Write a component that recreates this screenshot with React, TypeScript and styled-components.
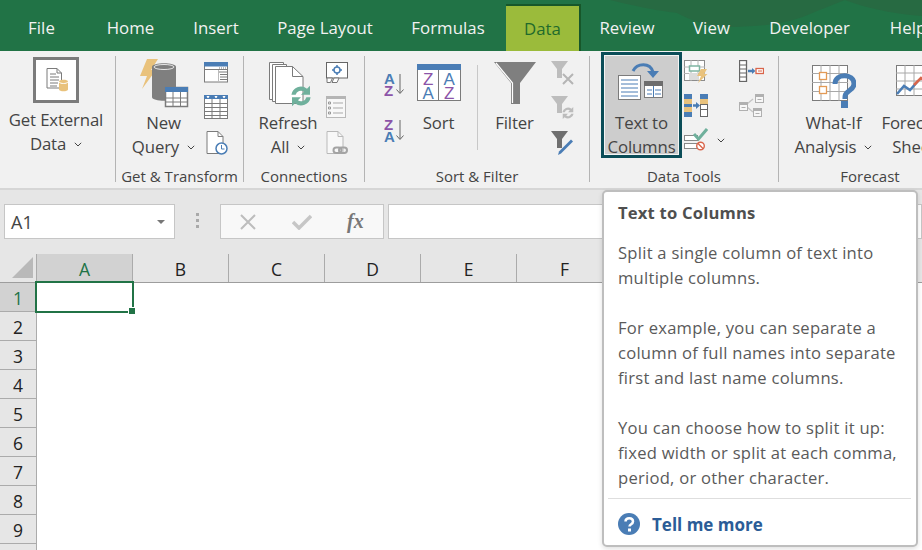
import React from "react";
import styled, { createGlobalStyle } from "styled-components";

const Global = createGlobalStyle`
  html, body { margin: 0; padding: 0; background: #fff; }
  body { width: 922px; height: 550px; overflow: hidden; font-family: "Open Sans", "Noto Sans", sans-serif; }
`;

const Page = styled.div`
  position: relative;
  width: 922px;
  height: 550px;
  overflow: hidden;
  background: #fff;
`;

/* ---------- title / tabs ---------- */
const TabBar = styled.div`
  position: relative;
  height: 51px;
  background: #217346;
  display: flex;
  align-items: stretch;
  padding-left: 8px;
  overflow: hidden;
`;
const Swoosh = styled.svg`
  position: absolute;
  left: 560px;
  top: 0;
`;
const Tab = styled.div<{ $w: number; $pr?: number }>`
  position: relative;
  flex: none;
  width: ${(p) => p.$w}px;
  padding: 4px ${(p) => p.$pr ?? 0}px 0 0;
  display: flex;
  align-items: center;
  justify-content: center;
  font-size: 16.8px;
  letter-spacing: 0.05px;
  box-sizing: border-box;
  white-space: nowrap;
  color: #f2f2f2;
`;
const ActiveTab = styled(Tab)`
  margin-top: 4px;
  padding-top: 0;
  color: #1f6a2c;
  background: #9bbb3b;
  border-top: 2px solid #17572a;
  border-right: 2px solid #17572a;
`;

/* ---------- ribbon ---------- */
const Ribbon = styled.div`
  display: flex;
  height: 137px;
  background: #f1f1f1;
  color: #444;
  border-bottom: 2px solid #d6d6d6;
  overflow: hidden;
`;
const Group = styled.div<{ $w: number }>`
  flex: none;
  width: ${(p) => p.$w}px;
  box-sizing: border-box;
  display: flex;
  flex-direction: column;
`;
const GroupBody = styled.div<{ $sep?: boolean }>`
  flex: 1;
  min-height: 0;
  display: flex;
  flex-direction: column;
  margin: 5px 0 6px;
  border-right: ${(p) => (p.$sep === false ? "0" : "1px solid #b4b4b4")};
`;
const Tools = styled.div`
  flex: 1;
  min-height: 0;
  display: flex;
  align-items: flex-start;
`;
const GroupLabel = styled.div`
  flex: none;
  height: 23px;
  margin-bottom: -6px;
  text-align: center;
  font-size: 15px;
  line-height: 23px;
  white-space: nowrap;
`;
const Large = styled.div<{ $w: number; $ml?: number; $iconTop?: number }>`
  flex: none;
  width: ${(p) => p.$w}px;
  margin-left: ${(p) => p.$ml ?? 0}px;
  padding-top: ${(p) => p.$iconTop ?? 0}px;
  display: flex;
  flex-direction: column;
  align-items: center;
  font-size: 16.8px;
  letter-spacing: -0.15px;
  white-space: nowrap;
`;
const IconSlot = styled.div<{ $h: number }>`
  flex: none;
  height: ${(p) => p.$h}px;
  display: flex;
  align-items: flex-start;
  justify-content: center;
`;
const Line = styled.div`
  flex: none;
  height: 24px;
  line-height: 24px;
  display: flex;
  align-items: center;
  gap: 8px;
`;
const ValidationRow = styled(Line)`
  gap: 9px;
`;
const Stack = styled.div<{ $ml: number; $pt: number; $gap: number }>`
  flex: none;
  margin-left: ${(p) => p.$ml}px;
  padding-top: ${(p) => p.$pt}px;
  display: flex;
  flex-direction: column;
  gap: ${(p) => p.$gap}px;
`;
const VRule = styled.div`
  flex: none;
  width: 1px;
  height: 85px;
  margin: 9px 0 0 11px;
  background: #c8c8c8;
`;
const Selected = styled(Large)`
  height: 106px;
  box-sizing: border-box;
  background: #cdcdcd;
  border: 3px solid #0b4d58;
  box-shadow: inset 0 0 0 1px #f4f4f4;
  margin-top: -4px;
`;
const Chevron = () => (
  <svg width="8" height="5" viewBox="0 0 8 5"><path d="M.8.8 4 4 7.2.8" fill="none" stroke="#444" strokeWidth="1" /></svg>
);

/* ---------- icons ---------- */
const GR = "#7b7b7b";
const BL = "#4a7db5";
const OR = "#e9c27c";

const ExternalIcon = () => (
  <svg width="46" height="46" viewBox="0 0 46 46">
    <rect x="1.500" y="1.500" width="43" height="43" fill="#fff" stroke={GR} strokeWidth="3" />
    <path d="M14 11.500h10l4.500 4.500v15h-14.500z" fill="#fff" stroke={GR} />
    <path d="M24 11.500v4.500h4.500M17 17h6M17 20h9M17 23h9M17 26h8M17 29h7" fill="none" stroke={GR} />
    <path d="M26 24.500c0-2.400 9-2.400 9 0v8c0 2.400-9 2.400-9 0z" fill={OR} />
    <path d="M26 25c1.500 2 7.500 2 9 0" fill="none" stroke="#fff" />
  </svg>
);
const QueryIcon = () => (
  <svg width="50" height="50" viewBox="0 0 50 50">
    <path d="M8 1h11l-7 11h5L3 31l5-13H1z" fill={OR} />
    <path d="M13 9c0-5 24-5 24 0v30c0 5-24 5-24 0z" fill="#7f7f7f" />
    <ellipse cx="25" cy="9" rx="10" ry="2.500" fill="none" stroke="#e6e6e6" />
    <rect x="26.500" y="29.500" width="22" height="19" fill="#fff" stroke={GR} strokeWidth="1.500" />
    <rect x="26" y="29" width="23" height="5" fill={BL} />
    <path d="M26.500 40h22M26.500 44h22M34 34v15M41.500 34v15" stroke={GR} fill="none" />
  </svg>
);
const FormWindow = () => (
  <svg width="24" height="21" viewBox="0 0 24 21">
    <rect x=".5" y=".5" width="23" height="19.500" fill="#fff" stroke={GR} />
    <rect width="24" height="4.500" fill={BL} />
    <path d="M1 7.500h22" stroke={GR} />
    <path d="M15 10h8M16 12.500h7M16 15h7M16 17.500h7" stroke={GR} />
    <path d="M15 6h8" stroke={GR} strokeDasharray="1 1" />
    <path d="M14.500 8v12" stroke="#bbb" />
  </svg>
);
const GridTable = () => (
  <svg width="24" height="24" viewBox="0 0 24 24">
    <rect x=".5" y=".5" width="23" height="23" fill="#fff" stroke={GR} />
    <rect width="24" height="4" fill={BL} />
    <path d="M2.500 1h3l-1 2h-1zM10.500 1h3l-1 2h-1zM18.500 1h3l-1 2h-1z" fill="#fff" />
    <path d="M0 8.500h24M0 12.500h24M0 16.500h24M0 20.500h24M8 4v20M16 4v20" stroke={GR} />
  </svg>
);
const ClockDoc = () => (
  <svg width="24" height="24" viewBox="0 0 24 24">
    <path d="M3 .5h11l5 5v17H3z" fill="#fff" stroke={GR} />
    <path d="M14 .5v5h5" fill="none" stroke={GR} />
    <circle cx="17.500" cy="17.500" r="5.500" fill="#fff" stroke={BL} strokeWidth="1.500" />
    <path d="M17.500 14v4h3" fill="none" stroke={BL} />
  </svg>
);
const RefreshArrows = ({ color, x, y, s }: { color: string; x: number; y: number; s: number }) => (
  <g transform={`translate(${x} ${y}) scale(${s})`}>
    <path d="M2 9a8 8 0 0 1 13-5l2.500-2.500V9h-7.500l2.600-2.600A4.600 4.600 0 0 0 5.500 9z" fill={color} />
    <path d="M18 11a8 8 0 0 1-13 5l-2.500 2.500V11H10l-2.600 2.600A4.600 4.600 0 0 0 14.500 11z" fill={color} />
  </g>
);
const RefreshIcon = () => (
  <svg width="50" height="46" viewBox="0 0 50 46">
    <path d="M6.500 .5h14v37h-14z" fill="#fff" stroke={GR} />
    <path d="M9.500 2.500h14v37h-14z" fill="#fff" stroke={GR} />
    <path d="M12.500 4.500h17l10.500 10v27h-27.500z" fill="#fff" stroke={GR} />
    <path d="M29.500 4.500v10h10.500" fill="none" stroke={GR} />
    <RefreshArrows color="#6fb09c" x={26} y={22} s={1.200} />
  </svg>
);
const Slicer = () => (
  <svg width="22" height="21" viewBox="0 0 22 21">
    <rect x=".5" y=".5" width="21" height="15.500" fill="#fff" stroke="#666" />
    <path d="M1 16h5.500l-2 4.500H1zM8 16h5l-2 4.500H6z" fill="#fff" stroke="#777" />
    <circle cx="11" cy="8" r="3" fill="none" stroke={BL} strokeWidth="1.500" />
    <path d="M11 3v2M11 11v2M6 8h2M14 8h2" stroke={BL} strokeWidth="1.500" />
  </svg>
);
const PropList = () => (
  <svg width="20" height="22" viewBox="0 0 20 22">
    <rect x=".5" y=".5" width="19" height="21" fill="#f8f8f8" stroke="#b9b9b9" />
    <rect width="20" height="3" fill="#b5b5b5" />
    <path d="M7 7h10M7 12h10M7 17h10" stroke="#a9a9a9" />
    <path d="M2.500 6h2v2h-2zM2.500 11h2v2h-2zM2.500 16h2v2h-2z" fill="none" stroke="#999" />
  </svg>
);
const LinkDoc = () => (
  <svg width="22" height="24" viewBox="0 0 22 24">
    <path d="M1 .5h11l5 5v17H1z" fill="#f8f8f8" stroke="#b9b9b9" />
    <path d="M12 .5v5h5" fill="none" stroke="#b9b9b9" />
    <rect x="7.500" y="16.500" width="8" height="5.500" rx="2.700" fill="none" stroke="#a4a4a4" strokeWidth="2" />
    <rect x="13" y="16.500" width="8" height="5.500" rx="2.700" fill="none" stroke="#a4a4a4" strokeWidth="2" />
  </svg>
);
const SortSmall = ({ flip }: { flip?: boolean }) => (
  <svg width="21" height="24" viewBox="0 0 21 24">
    <text x="0" y="12" fontSize="15" fontWeight="700" fontFamily="Liberation Sans" fill={flip ? "#8c54a8" : BL}>{flip ? "Z" : "A"}</text>
    <text x="0" y="23.500" fontSize="15" fontWeight="700" fontFamily="Liberation Sans" fill={flip ? BL : "#8c54a8"}>{flip ? "A" : "Z"}</text>
    <path d="M16 2v19M12.500 17.500l3.500 4 3.500-4" fill="none" stroke="#666" />
  </svg>
);
const SortIcon = () => (
  <svg width="44" height="37" viewBox="0 0 44 37">
    <rect x=".5" y=".5" width="43" height="36" fill="#fff" stroke={GR} />
    <rect width="44" height="6" fill={BL} />
    <path d="M21.500 6v31" stroke={GR} />
    <g fontFamily="Liberation Sans" fontSize="17" textAnchor="middle">
      <text x="11" y="20.500" fill="#8c54a8">Z</text>
      <text x="11" y="34.500" fill={BL}>A</text>
      <text x="32" y="20.500" fill={BL}>A</text>
      <text x="32" y="34.500" fill="#8c54a8">Z</text>
    </g>
  </svg>
);
const FilterIcon = () => (
  <svg width="42" height="42" viewBox="0 0 42 42">
    <path d="M0 0h42L26 21v21h-9V21z" fill="#7f7f7f" />
    <path d="M2 1l16.500 20v20" fill="none" stroke="#fff" strokeWidth="1.200" />
  </svg>
);
const FunnelSmall = ({ dim }: { dim?: boolean }) => (
  <path d="M0 0h17L11 8v9H6V8z" fill={dim ? "#bdbdbd" : "#6f6f6f"} />
);
const ClearFilter = () => (
  <svg width="24" height="24" viewBox="0 0 24 24">
    <FunnelSmall dim />
    <path d="M12 13l10 10M22 13 12 23" stroke="#b5b5b5" strokeWidth="2" />
  </svg>
);
const ReapplyFilter = () => (
  <svg width="24" height="24" viewBox="0 0 24 24">
    <FunnelSmall dim />
    <RefreshArrows color="#bcbcbc" x={10} y={10} s={0.700} />
  </svg>
);
const AdvancedFilter = () => (
  <svg width="24" height="25" viewBox="0 0 24 25">
    <FunnelSmall />
    <path d="M7 24l1-3.500L20 8.500l2 2L10 22.500z" fill={BL} />
  </svg>
);
const TextColumnsIcon = () => (
  <svg width="48" height="39" viewBox="0 0 48 39">
    <rect x=".5" y="13.500" width="22" height="24" fill="#fff" stroke={GR} />
    <path d="M3 18h17M3 22h17M3 26h17M3 30h17M3 34h17" stroke={BL} />
    <rect x="26.500" y="19.500" width="18" height="16" fill="#fff" stroke={GR} />
    <rect x="26" y="19" width="19" height="5" fill="#6d6d6d" />
    <path d="M35.500 24v11M29 28h5M37 28h6M29 32h5M37 32h6" stroke={BL} />
    <path d="M15 9c4-8 17-9 20 1" fill="none" stroke={BL} strokeWidth="3" />
    <path d="M29 9h12l-6 7z" fill={BL} />
  </svg>
);
const FlashFill = () => (
  <svg width="25" height="23" viewBox="0 0 25 23">
    <rect x=".5" y=".5" width="20" height="20" fill="#fff" stroke="#8c8c8c" />
    <path d="M0 7h21M0 13.500h21M7 0v21M14 0v21" stroke="#b5b5b5" />
    <rect x="5.500" y="6" width="10" height="5" fill="#fff" stroke="#7fb5a2" strokeWidth="1.500" />
    <rect x="5" y="13" width="9" height="7" fill="#dcdcdc" />
    <path d="M17 9h6l-3 5h3.500L14 23l3-7h-4z" fill={OR} />
  </svg>
);
const RemoveDup = () => (
  <svg width="24" height="23" viewBox="0 0 24 23">
    <rect width="8" height="23" fill={BL} />
    <rect y="5" width="8" height="5" fill={OR} />
    <rect y="13" width="8" height="5" fill={OR} />
    <rect x="16.500" y=".5" width="7" height="22" fill="#fff" stroke="#666" />
    <rect x="16" width="8" height="5" fill={BL} />
    <rect x="16" y="5" width="8" height="5" fill={OR} />
    <path d="M16 10.500h8M16 15.500h8" stroke="#666" />
    <path d="M9 11.500h4" stroke={BL} strokeWidth="2.500" />
    <path d="M12 8l4 3.500-4 3.500z" fill={BL} />
  </svg>
);
const Validation = () => (
  <svg width="24" height="24" viewBox="0 0 24 24">
    <rect x=".5" y="7.500" width="13" height="5" fill="#fff" stroke="#888" />
    <rect x=".5" y="15.500" width="13" height="5" fill="#fff" stroke="#888" />
    <path d="M10 6l4.500 5L23 1" fill="none" stroke="#6fb09c" strokeWidth="3" />
    <circle cx="16.500" cy="18" r="3.800" fill="#fff" stroke="#d9654b" strokeWidth="1.400" />
    <path d="M13.800 15.300l5.400 5.400" stroke="#d9654b" strokeWidth="1.400" />
  </svg>
);
const Consolidate = () => (
  <svg width="25" height="22" viewBox="0 0 25 22">
    <rect x=".5" y=".5" width="7" height="21" fill="#fff" stroke="#666" strokeWidth="1.300" />
    <path d="M0 5h8M0 9h8M0 13h8M0 17h8" stroke="#666" />
    <path d="M9 11h5" stroke={BL} strokeWidth="2.500" />
    <path d="M13 8l3.500 3-3.500 3z" fill={BL} />
    <rect x="17" y="8.500" width="7.500" height="5" fill="#fff" stroke="#d9654b" strokeWidth="1.300" />
    <path d="M19 11h4" stroke="#d9654b" />
  </svg>
);
const Relations = () => (
  <svg width="25" height="23" viewBox="0 0 25 23">
    <path d="M8 10l6-5M8 13l6 5" stroke="#c4c4c4" strokeWidth="1.300" />
    <rect x=".5" y="8.500" width="8" height="8" fill="#f7f7f7" stroke="#b0b0b0" />
    <rect y="8" width="9" height="3" fill="#b0b0b0" />
    <path d="M2.500 13.500h4" stroke="#b0b0b0" />
    <rect x="16.500" y=".5" width="8" height="8" fill="#f7f7f7" stroke="#b0b0b0" />
    <rect x="16" width="9" height="3" fill="#b0b0b0" />
    <path d="M18.500 5.500h4" stroke="#b0b0b0" />
    <rect x="14.500" y="14.500" width="8" height="8" fill="#f7f7f7" stroke="#b0b0b0" />
    <rect x="14" y="14" width="9" height="3" fill="#b0b0b0" />
    <path d="M16.500 19.500h4" stroke="#b0b0b0" />
  </svg>
);
const WhatIf = () => (
  <svg width="44" height="43" viewBox="0 0 44 43">
    <rect x=".5" y=".5" width="35" height="35" fill="#fff" stroke={GR} />
    <path d="M0 8.500h36M0 17.500h36M0 26.500h36M9 0v36M18 0v36M27 0v36" stroke="#a8a8a8" />
    <rect x="7.500" y="7.500" width="7" height="7" fill="#fff" stroke="#e39a55" strokeWidth="1.300" />
    <rect x="7.500" y="21.500" width="7" height="7" fill="#fff" stroke="#e39a55" strokeWidth="1.300" />
    <path d="M23 19c0-11 19-11 19 0 0 7-9 6-9 13v2" fill="none" stroke={BL} strokeWidth="5" />
    <rect x="29" y="36" width="7" height="7" fill={BL} />
  </svg>
);
const ForecastIcon = () => (
  <svg width="36" height="36" viewBox="0 0 36 36">
    <rect x=".5" y=".5" width="34" height="30" fill="#fff" stroke={GR} />
    <path d="M0 8h35M0 16h35M0 24h35M9 0v31M18 0v31M27 0v31" stroke="#a8a8a8" />
    <path d="M1 29l7-8 6 4 8-9" fill="none" stroke={BL} strokeWidth="2.500" />
    <path d="M18 20l7-7 5 4 5-3" fill="none" stroke="#d9654b" strokeWidth="2.500" />
  </svg>
);

/* ---------- formula bar ---------- */
const FormulaBar = styled.div`
  height: 64px;
  background: #e6e6e6;
  display: flex;
  align-items: flex-start;
  padding-top: 14px;
  box-sizing: border-box;
  padding-left: 4px;
`;
const NameBox = styled.div`
  width: 171px;
  height: 35px;
  box-sizing: border-box;
  background: #fff;
  border: 1px solid #c6c6c6;
  display: flex;
  align-items: center;
  justify-content: space-between;
  padding: 0 9px 0 6px;
  font-size: 18px;
  color: #444;
`;
const Caret = styled.span`
  width: 0;
  height: 0;
  border-left: 4px solid transparent;
  border-right: 4px solid transparent;
  border-top: 4px solid #777;
`;
const Grip = styled.div`
  width: 45px;
  display: flex;
  flex-direction: column;
  align-items: center;
  gap: 3px;
  padding-top: 9px;
  & > i { width: 3px; height: 3px; background: #a9a9a9; display: block; }
`;
const FxButtons = styled.div`
  width: 164px;
  height: 35px;
  box-sizing: border-box;
  background: #f8f8f8;
  border: 1px solid #c6c6c6;
  display: flex;
  align-items: center;
  padding-left: 19px;
  gap: 36px;
`;
const FxGlyph = styled.span`
  font-family: "Liberation Serif", serif;
  font-style: italic;
  font-weight: 700;
  font-size: 20px;
  color: #777;
  margin-left: -1px;
`;
const FormulaInput = styled.div`
  flex: 1;
  height: 35px;
  box-sizing: border-box;
  margin-left: 4px;
  background: #fff;
  border: 1px solid #c6c6c6;
`;

/* ---------- sheet ---------- */
const ColHeaderRow = styled.div`
  display: flex;
  height: 29px;
  box-sizing: border-box;
  background: #e6e6e6;
  border-bottom: 1px solid #9d9d9d;
`;
const Corner = styled.div`
  flex: none;
  width: 37px;
  box-sizing: border-box;
  border-right: 1px solid #ababab;
  display: flex;
  align-items: flex-end;
  justify-content: flex-end;
  padding: 0 3px 4px 0;
`;
const ColHead = styled.div<{ $sel?: boolean }>`
  flex: none;
  width: 96px;
  box-sizing: border-box;
  border-right: 1px solid #ababab;
  text-align: center;
  font-size: 17.500px;
  line-height: 30px;
  background: ${(p) => (p.$sel ? "#d2d2d2" : "transparent")};
  color: ${(p) => (p.$sel ? "#217346" : "#222")};
`;
const SheetBody = styled.div`
  position: relative;
  display: flex;
  flex-direction: column;
`;
const RowHead = styled.div<{ $sel?: boolean }>`
  flex: none;
  width: 37px;
  height: 29px;
  box-sizing: border-box;
  border-right: 1px solid #ababab;
  border-bottom: 1px solid #ababab;
  text-align: center;
  font-size: 17.500px;
  line-height: 30px;
  background: ${(p) => (p.$sel ? "#d2d2d2" : "#e6e6e6")};
  color: ${(p) => (p.$sel ? "#217346" : "#222")};
`;
const Active = styled.div`
  position: absolute;
  left: 35px;
  top: -2px;
  width: 99px;
  height: 32px;
  box-sizing: border-box;
  border: 2px solid #217346;
`;
const Handle = styled.div`
  position: absolute;
  right: -3px;
  bottom: -3px;
  width: 7px;
  height: 7px;
  box-sizing: border-box;
  background: #217346;
  border: 1px solid #fff;
  border-right: 0;
  border-bottom: 0;
`;

/* ---------- tooltip ---------- */
const Tip = styled.div`
  position: absolute;
  left: 602px;
  top: 190px;
  width: 316px;
  height: 357px;
  box-sizing: border-box;
  background: #fff;
  border: 2px solid #bebebe;
  border-radius: 5px;
  box-shadow: 0 2px 5px rgba(0, 0, 0, 0.12);
  padding: 8px 5px 0 14px;
  display: flex;
  flex-direction: column;
  color: #5a5a5a;
  font-size: 16.600px;
  line-height: 25px;
  letter-spacing: 0.25px;
`;
const TipTitle = styled.div`
  font-weight: 700;
  font-size: 16.600px;
  letter-spacing: 0.2px;
  color: #4f4f4f;
  margin-bottom: 15px;
`;
const TipPara = styled.p`
  margin: 0 0 25px;
  white-space: nowrap;
`;
const TipFoot = styled.div`
  margin: -17.500px 0 0 -10px;
  border-top: 1px solid #dedede;
  padding: 13px 0 0 10px;
  display: flex;
  align-items: center;
  gap: 12px;
  font-weight: 700;
  color: #2b5c97;
  font-size: 17px;
  letter-spacing: 0;
`;

export default function App() {
  return (
    <Page>
      <Global />
      <TabBar>
        <Swoosh width="362" height="51" viewBox="0 0 362 51">
          <path d="M50 0C90 10 110 12 117 13 130 20 150 28 175 27 200 26 225 25 250 14 265 8 275 4 285 0z" fill="#276a42" />
          <path d="M285 0c15 6 45 14 77 16V0z" fill="#276a42" />
        </Swoosh>
        <Tab $w={78.500} $pr={11.500}>File</Tab>
        <Tab $w={88}>Home</Tab>
        <Tab $w={83}>Insert</Tab>
        <Tab $w={135}>Page Layout</Tab>
        <Tab $w={113.500} $pr={2.500}>Formulas</Tab>
        <ActiveTab $w={75}>Data</ActiveTab>
        <Tab $w={92}>Review</Tab>
        <Tab $w={77}>View</Tab>
        <Tab $w={119}>Developer</Tab>
        <Tab $w={78}>Help</Tab>
      </TabBar>
      <Ribbon>
        <Group $w={116}>
          <GroupBody>
            <Tools>
              <Large $w={112} $iconTop={1}>
                <IconSlot $h={51}><ExternalIcon /></IconSlot>
                <Line>Get External</Line>
                <Line>Data <Chevron /></Line>
              </Large>
            </Tools>
          </GroupBody>
        </Group>
        <Group $w={128}>
          <GroupBody>
            <Tools>
              <Large $w={79} $ml={8} $iconTop={2}>
                <IconSlot $h={53}><QueryIcon /></IconSlot>
                <Line>New</Line>
                <Line>Query <Chevron /></Line>
              </Large>
              <Stack $ml={1} $pt={6} $gap={12}>
                <FormWindow />
                <GridTable />
                <ClockDoc />
              </Stack>
            </Tools>
            <GroupLabel>Get &amp; Transform</GroupLabel>
          </GroupBody>
        </Group>
        <Group $w={121}>
          <GroupBody>
            <Tools>
              <Large $w={76} $ml={6} $iconTop={6}>
                <IconSlot $h={49}><RefreshIcon /></IconSlot>
                <Line>Refresh</Line>
                <Line>All <Chevron /></Line>
              </Large>
              <Stack $ml={0} $pt={6} $gap={13}>
                <Slicer />
                <PropList />
                <LinkDoc />
              </Stack>
            </Tools>
            <GroupLabel>Connections</GroupLabel>
          </GroupBody>
        </Group>
        <Group $w={225}>
          <GroupBody>
            <Tools>
              <Stack $ml={19} $pt={16} $gap={22}>
                <SortSmall />
                <SortSmall flip />
              </Stack>
              <Large $w={55} $ml={6} $iconTop={8}>
                <IconSlot $h={47}><SortIcon /></IconSlot>
                <Line>Sort</Line>
              </Large>
              <VRule />
              <Large $w={73} $iconTop={6}>
                <IconSlot $h={49}><FilterIcon /></IconSlot>
                <Line>Filter</Line>
              </Large>
              <Stack $ml={0} $pt={5} $gap={11}>
                <ClearFilter />
                <ReapplyFilter />
                <AdvancedFilter />
              </Stack>
            </Tools>
            <GroupLabel>Sort &amp; Filter</GroupLabel>
          </GroupBody>
        </Group>
        <Group $w={189}>
          <GroupBody>
            <Tools>
              <Selected $w={81} $ml={11} $iconTop={7}>
                <IconSlot $h={49}><TextColumnsIcon /></IconSlot>
                <Line>Text to</Line>
                <Line>Columns</Line>
              </Selected>
              <Stack $ml={2} $pt={4} $gap={11}>
                <FlashFill />
                <RemoveDup />
                <ValidationRow><Validation /><Chevron /></ValidationRow>
              </Stack>
              <Stack $ml={14} $pt={4} $gap={12}>
                <Consolidate />
                <Relations />
              </Stack>
            </Tools>
            <GroupLabel>Data Tools</GroupLabel>
          </GroupBody>
        </Group>
        <Group $w={182}>
          <GroupBody $sep={false}>
            <Tools>
              <Large $w={99} $ml={5} $iconTop={9}>
                <IconSlot $h={46}><WhatIf /></IconSlot>
                <Line>What-If</Line>
                <Line>Analysis <Chevron /></Line>
              </Large>
              <Large $w={62} $iconTop={9}>
                <IconSlot $h={46}><ForecastIcon /></IconSlot>
                <Line>Forecast</Line>
                <Line>Sheet</Line>
              </Large>
            </Tools>
            <GroupLabel>Forecast</GroupLabel>
          </GroupBody>
        </Group>
      </Ribbon>
      <FormulaBar>
        <NameBox>A1<Caret /></NameBox>
        <Grip><i /><i /><i /></Grip>
        <FxButtons>
          <svg width="16" height="16" viewBox="0 0 16 16"><path d="M1 1l14 14M15 1 1 15" stroke="#bdbdbd" strokeWidth="2" /></svg>
          <svg width="20" height="16" viewBox="0 0 20 16"><path d="M1 8l6 6L19 2" fill="none" stroke="#c6c6c6" strokeWidth="3.500" /></svg>
          <FxGlyph>fx</FxGlyph>
        </FxButtons>
        <FormulaInput />
      </FormulaBar>
      <ColHeaderRow>
        <Corner>
          <svg width="21" height="21" viewBox="0 0 21 21"><path d="M21 0v21H0z" fill="#b9b9b9" /></svg>
        </Corner>
        <ColHead $sel>A</ColHead>
        {["B", "C", "D", "E", "F"].map((c) => (
          <ColHead key={c}>{c}</ColHead>
        ))}
      </ColHeaderRow>
      <SheetBody>
        {[1, 2, 3, 4, 5, 6, 7, 8, 9].map((n) => (
          <RowHead key={n} $sel={n === 1}>{n}</RowHead>
        ))}
        <RowHead />
        <Active><Handle /></Active>
      </SheetBody>
      <Tip>
        <TipTitle>Text to Columns</TipTitle>
        <TipPara>Split a single column of text into<br />multiple columns.</TipPara>
        <TipPara>For example, you can separate a<br />column of full names into separate<br />first and last name columns.</TipPara>
        <TipPara>You can choose how to split it up:<br />fixed width or split at each comma,<br />period, or other character.</TipPara>
        <TipFoot>
          <svg width="22" height="22" viewBox="0 0 22 22">
            <circle cx="11" cy="11" r="11" fill={BL} />
            <path d="M7.500 8.500c0-4.500 7.500-4.500 7.500 0 0 3-3.500 2.500-3.500 5" fill="none" stroke="#fff" strokeWidth="2.500" />
            <rect x="10" y="15.500" width="3" height="3" fill="#fff" />
          </svg>
          Tell me more
        </TipFoot>
      </Tip>
    </Page>
  );
}
